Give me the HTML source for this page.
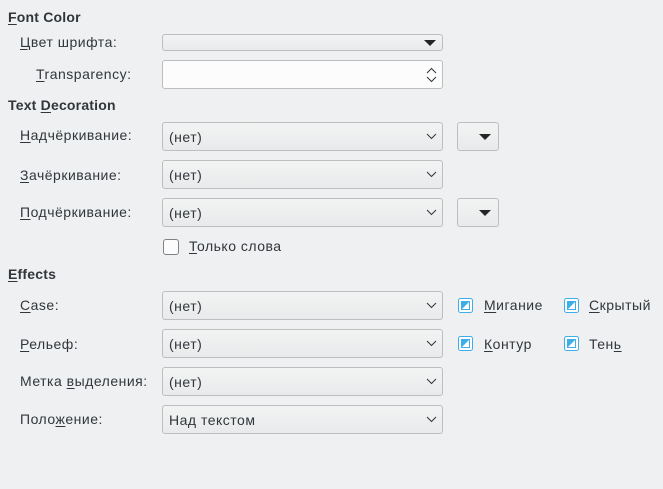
<!DOCTYPE html>
<html><head><meta charset="utf-8"><style>
body{margin:0;width:663px;height:489px;background:#eff0f1;font-family:"Liberation Sans","DejaVu Sans",sans-serif;font-size:14px;color:#31363b;position:relative;overflow:hidden}
.t{position:absolute;white-space:nowrap;line-height:16px;letter-spacing:0.5px}
.b{font-weight:bold;letter-spacing:0.2px}
u{text-decoration:underline;text-underline-offset:2px}
.cb{position:absolute;left:162px;width:279px;height:27px;border:1px solid #bcbebf;border-radius:3px;background:linear-gradient(#f2f3f3,#e9eaeb);box-sizing:content-box}
.cb span{position:absolute;left:6px;top:6px;line-height:16px;letter-spacing:0.5px}
.cb svg{position:absolute;right:5px;top:10px}
.sb{position:absolute;left:457px;width:40px;height:27px;border:1px solid #bcbebf;border-radius:3px;background:linear-gradient(#f2f3f3,#e9eaeb)}
.sb i{position:absolute;left:21px;top:11px;border-left:6px solid transparent;border-right:6px solid transparent;border-top:6px solid #232629}
.ck{position:absolute;width:15px;height:15px}
</style></head><body>
<div class="t b" style="left:8px;top:9px"><u>F</u>ont Color</div>
<div class="t" style="left:20px;top:34px"><u>Ц</u>вет шрифта:</div>
<div style="position:absolute;left:162px;top:34px;width:279px;height:15px;border:1px solid #bcbebf;border-radius:3px;background:linear-gradient(#f2f3f3,#e9eaeb)"><i style="position:absolute;right:6px;top:5px;border-left:6px solid transparent;border-right:6px solid transparent;border-top:6px solid #232629"></i></div>
<div class="t" style="left:36px;top:66px"><u>T</u>ransparency:</div>
<div style="position:absolute;left:162px;top:60px;width:279px;height:27px;border:1px solid #bcbebf;border-radius:3px;background:#fcfcfc">
<svg style="position:absolute;right:5px;top:6px" width="11" height="16" viewBox="0 0 11 16"><path d="M1 6L5.5 1.5L10 6M1 10L5.5 14.5L10 10" fill="none" stroke="#31363b" stroke-width="1"/></svg></div>
<div class="t b" style="left:8px;top:97px">Text <u>D</u>ecoration</div>

<div class="t" style="left:20px;top:127px"><u>Н</u>адчёркивание:</div>
<div class="cb" style="top:122px"><span>(нет)</span><svg width="11" height="7"><path d="M1 1L5.5 5.5L10 1" fill="none" stroke="#31363b"/></svg></div>
<div class="sb" style="top:122px"><i></i></div>

<div class="t" style="left:20px;top:167px"><u>З</u>ачёркивание:</div>
<div class="cb" style="top:160px"><span>(нет)</span><svg width="11" height="7"><path d="M1 1L5.5 5.5L10 1" fill="none" stroke="#31363b"/></svg></div>

<div class="t" style="left:20px;top:204px"><u>П</u>одчёркивание:</div>
<div class="cb" style="top:198px"><span>(нет)</span><svg width="11" height="7"><path d="M1 1L5.5 5.5L10 1" fill="none" stroke="#31363b"/></svg></div>
<div class="sb" style="top:198px"><i></i></div>

<div style="position:absolute;left:163px;top:239px;width:14px;height:14px;border:1px solid #7f8285;border-radius:3px;background:#fcfcfc"></div>
<div class="t" style="left:189px;top:238px"><u>Т</u>олько слова</div>

<div class="t b" style="left:8px;top:266px"><u>E</u>ffects</div>

<div class="t" style="left:20px;top:297px"><u>C</u>ase:</div>
<div class="cb" style="top:291px"><span>(нет)</span><svg width="11" height="7"><path d="M1 1L5.5 5.5L10 1" fill="none" stroke="#31363b"/></svg></div>
<div class="t" style="left:20px;top:336px"><u>Р</u>ельеф:</div>
<div class="cb" style="top:329px"><span>(нет)</span><svg width="11" height="7"><path d="M1 1L5.5 5.5L10 1" fill="none" stroke="#31363b"/></svg></div>
<div class="t" style="left:20px;top:373px">Метка <u>в</u>ыделения:</div>
<div class="cb" style="top:367px"><span>(нет)</span><svg width="11" height="7"><path d="M1 1L5.5 5.5L10 1" fill="none" stroke="#31363b"/></svg></div>
<div class="t" style="left:20px;top:411px">Поло<u>ж</u>ение:</div>
<div class="cb" style="top:405px"><span>Над текстом</span><svg width="11" height="7"><path d="M1 1L5.5 5.5L10 1" fill="none" stroke="#31363b"/></svg></div>

<svg class="ck" style="left:458px;top:298px" viewBox="0 0 15 15"><rect x="0.5" y="0.5" width="14" height="14" rx="2" fill="#fff" stroke="#3daee9"/><rect x="3" y="3" width="9" height="9" fill="#3daee9"/><path d="M11 4V11H4Z" fill="#fff"/></svg>
<div class="t" style="left:484px;top:297px"><u>М</u>игание</div>
<svg class="ck" style="left:564px;top:298px" viewBox="0 0 15 15"><rect x="0.5" y="0.5" width="14" height="14" rx="2" fill="#fff" stroke="#3daee9"/><rect x="3" y="3" width="9" height="9" fill="#3daee9"/><path d="M11 4V11H4Z" fill="#fff"/></svg>
<div class="t" style="left:589px;top:297px"><u>С</u>крытый</div>
<svg class="ck" style="left:458px;top:336px" viewBox="0 0 15 15"><rect x="0.5" y="0.5" width="14" height="14" rx="2" fill="#fff" stroke="#3daee9"/><rect x="3" y="3" width="9" height="9" fill="#3daee9"/><path d="M11 4V11H4Z" fill="#fff"/></svg>
<div class="t" style="left:484px;top:336px"><u>К</u>онтур</div>
<svg class="ck" style="left:564px;top:336px" viewBox="0 0 15 15"><rect x="0.5" y="0.5" width="14" height="14" rx="2" fill="#fff" stroke="#3daee9"/><rect x="3" y="3" width="9" height="9" fill="#3daee9"/><path d="M11 4V11H4Z" fill="#fff"/></svg>
<div class="t" style="left:589px;top:336px">Тен<u>ь</u></div>
</body></html>
